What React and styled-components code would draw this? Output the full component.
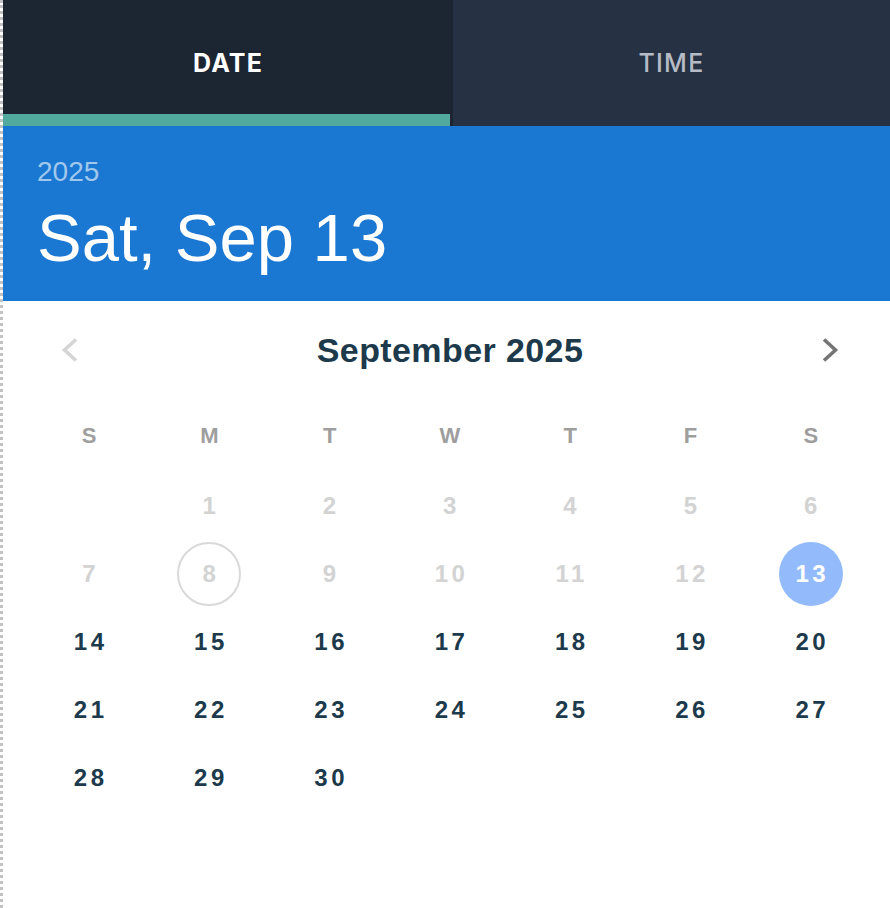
import React from 'react';
import styled, { createGlobalStyle } from 'styled-components';

const GlobalStyle = createGlobalStyle`
  html, body {
    margin: 0;
    padding: 0;
    background: #fff;
  }
  body {
    font-family: 'Liberation Sans', Arial, sans-serif;
  }
`;

const Picker = styled.div`
  min-height: 908px;
  border-left: 3px dotted #c2c2c2;
  box-sizing: border-box;
  background: #fff;
`;

const Tabs = styled.div`
  display: flex;
  height: 126px;
`;

const Tab = styled.div`
  display: flex;
  flex-direction: column;
  width: ${(p) => (p.active ? '450px' : 'auto')};
  flex: ${(p) => (p.active ? 'none' : '1')};
  background: ${(p) => (p.active ? '#1c2532' : '#263243')};
`;

const TabLabel = styled.div`
  flex: 1;
  display: flex;
  align-items: center;
  justify-content: center;
  padding-top: 12px;
  font-family: 'Inter', 'Liberation Sans', sans-serif;
  font-size: 25px;
  letter-spacing: 1.2px;
  font-weight: ${(p) => (p.active ? 700 : 500)};
  color: ${(p) => (p.active ? '#ffffff' : '#b6bcc6')};
`;

const Indicator = styled.div`
  height: 12px;
  margin-right: 3px;
  background: ${(p) => (p.active ? '#52a99e' : 'transparent')};
`;

const Header = styled.div`
  height: 175px;
  box-sizing: border-box;
  padding: 29px 0 0 34px;
  background: #1a77d2;
  color: #fff;
`;

const Year = styled.div`
  font-size: 28px;
  line-height: 1.2;
  color: rgba(255, 255, 255, 0.6);
`;

const DateTitle = styled.div`
  margin-top: 12px;
  font-size: 67px;
  line-height: 1.1;
`;

const Body = styled.div`
  padding: 25px 19px 0 26px;
`;

const MonthRow = styled.div`
  display: flex;
  align-items: center;
  justify-content: space-between;
  height: 48px;
  padding: 0 17px;
`;

const NavButton = styled.button`
  width: 48px;
  height: 48px;
  display: flex;
  align-items: center;
  justify-content: center;
  border: none;
  background: none;
  padding: 0;
  color: ${(p) => (p.disabled ? '#d5d5d5' : '#757575')};
`;

const MonthLabel = styled.div`
  font-size: 34px;
  font-weight: 700;
  color: #1c3a4b;
  letter-spacing: 0.4px;
`;

const Grid = styled.div`
  display: grid;
  grid-template-columns: repeat(7, 1fr);
  grid-auto-rows: 68px;
`;

const WeekHead = styled(Grid)`
  margin-top: 28px;
  margin-bottom: 2px;
`;

const WeekDay = styled.div`
  display: flex;
  align-items: center;
  justify-content: center;
  font-size: 22px;
  font-weight: 700;
  color: #9e9e9e;
`;

const Cell = styled.div`
  display: flex;
  align-items: center;
  justify-content: center;
`;

const Day = styled.div`
  width: 64px;
  height: 64px;
  box-sizing: border-box;
  border-radius: 50%;
  display: flex;
  align-items: center;
  justify-content: center;
  font-size: 24px;
  font-weight: 700;
  letter-spacing: 3.5px;
  padding-left: 3px;
  color: ${(p) => (p.selected ? '#fff' : p.disabled ? '#d3d3d3' : '#1c3a4b')};
  background: ${(p) => (p.selected ? '#93bbfb' : 'transparent')};
  border: 2px solid ${(p) => (p.today ? '#d9d9d9' : 'transparent')};
`;

const Chevron = ({ dir }) => (
  <svg width="24" height="28" viewBox="0 0 24 28" fill="none">
    <path
      d={dir === 'left' ? 'M18 3.5 L6.5 14 L18 24.5' : 'M6 3.5 L17.5 14 L6 24.5'}
      stroke="currentColor"
      strokeWidth="3.6"
    />
  </svg>
);

const weekDays = ['S', 'M', 'T', 'W', 'T', 'F', 'S'];

const App = () => {
  const cells = [null];
  for (let d = 1; d <= 30; d++) cells.push(d);

  return (
    <Picker>
      <GlobalStyle />
      <Tabs>
        <Tab active>
          <TabLabel active>DATE</TabLabel>
          <Indicator active />
        </Tab>
        <Tab>
          <TabLabel>TIME</TabLabel>
          <Indicator />
        </Tab>
      </Tabs>
      <Header>
        <Year>2025</Year>
        <DateTitle>Sat, Sep 13</DateTitle>
      </Header>
      <Body>
        <MonthRow>
          <NavButton disabled>
            <Chevron dir="left" />
          </NavButton>
          <MonthLabel>September 2025</MonthLabel>
          <NavButton>
            <Chevron dir="right" />
          </NavButton>
        </MonthRow>
        <WeekHead>
          {weekDays.map((w, i) => (
            <WeekDay key={i}>{w}</WeekDay>
          ))}
        </WeekHead>
        <Grid>
          {cells.map((d, i) => (
            <Cell key={i}>
              {d && (
                <Day disabled={d < 13} today={d === 8} selected={d === 13}>
                  {d}
                </Day>
              )}
            </Cell>
          ))}
        </Grid>
      </Body>
    </Picker>
  );
};

export default App;
